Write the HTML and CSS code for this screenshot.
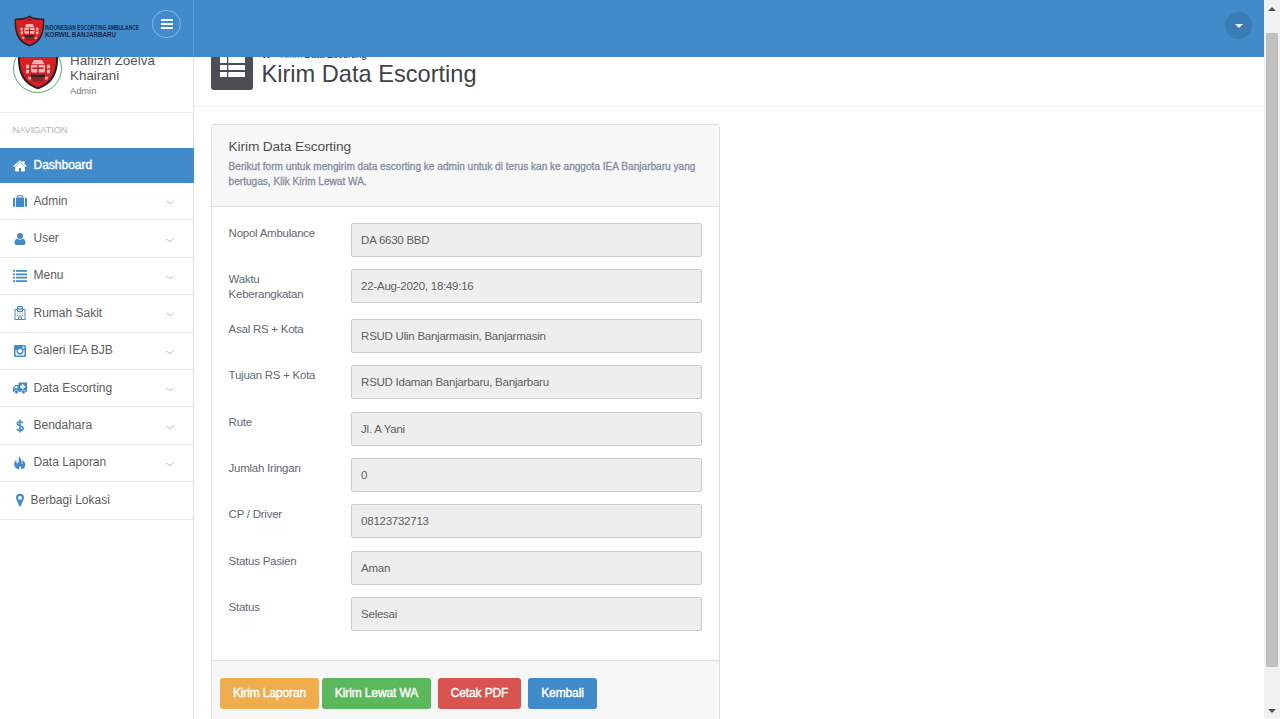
FILE: index.html
```html
<!DOCTYPE html>
<html lang="id">
<head>
<meta charset="utf-8">
<title>Kirim Data Escorting</title>
<link rel="stylesheet" href="styles.css">
</head>
<body>
<svg width="0" height="0" class="defs">
  <symbol id="shield" viewBox="0 0 30 30" preserveAspectRatio="none">
    <path d="M15 .5C11.500 3 6.500 3.300.7 3.200.2 15 2 25 15 29.500 28 25 29.800 15 29.300 3.200 23.500 3.300 18.500 3 15 .5z" fill="#252329"/>
    <path d="M15 2C11 4.200 7 4.700 2 4.600 1.800 15 4 24 15 28 26 24 28.200 15 28 4.600 23 4.700 19 4.200 15 2z" fill="#d81f26"/>
    <path d="M12 8.500h6l1.500 3h-9z" fill="#f3b5b0"/>
    <path d="M7.500 12v7M22.500 12v7" stroke="#f2c3bd" stroke-width="2.200" stroke-dasharray="2.500 1"/>
    <rect x="10" y="12" width="10" height="5.500" rx="1" fill="#efb4ad"/>
    <path d="M11 14.500h8M15 12v6" stroke="#b52026" stroke-width="1"/>
    <path d="M10 19h10v2H10z" fill="#33242a"/>
    <path d="M11 21h8v3h-8z" fill="#8f2228"/>
    <path d="M8 20.500h2v2H8zM20 20.500h2v2h-2z" fill="#edaaa4"/>
    <path d="M13 4.500h4" stroke="#551c21"/>
  </symbol>
</svg>

<div class="app">
  <header class="topbar">
    <div class="brand">
      <svg class="brand-shield"><use href="#shield"/></svg>
      <svg class="brand-name" viewBox="0 0 95 18">
        <text x="0" y="8" textLength="94" lengthAdjust="spacingAndGlyphs">INDONESIAN ESCORTING AMBULANCE</text>
        <text x="0" y="14.800" class="brand-sub" textLength="71" lengthAdjust="spacingAndGlyphs">KORWIL BANJARBARU</text>
      </svg>
      <button class="toggle"><span></span><span></span><span></span></button>
    </div>
    <button class="user-menu"><i></i></button>
  </header>

  <div class="body">
    <aside class="sidebar">
      <div class="profile">
        <div class="avatar"><svg><use href="#shield"/></svg></div>
        <div class="who"><div class="name">Hafiizh Zoelva<br>Khairani</div><div class="role">Admin</div></div>
      </div>
      <div class="nav-title">NAVIGATION</div>
      <nav>
        <a class="item active"><svg viewBox="0 0 14 14"><path d="M7 1.200L.3 7l.8.900L7 3l5.900 4.900.8-.9-2.200-1.900V2H9.700v1.500z"/><path d="M7 3.500L2.200 7.500v5h3.700V9h2.200v3.500h3.700v-5z"/></svg><span>Dashboard</span></a>
        <a class="item"><svg viewBox="0 0 14 14"><path d="M3 3.500h8V13H3zM0 5q0-1.500 1.500-1.500H2V13h-.5Q0 13 0 11.500zM12 3.500h.5Q14 3.500 14 5v6.500q0 1.500-1.500 1.500H12z"/><path d="M4.700 3.500V1.700h4.600v1.800" fill="none" stroke="currentColor" stroke-width="1.100"/></svg><span>Admin</span><b></b></a>
        <a class="item"><svg viewBox="0 0 14 14"><circle cx="7" cy="4" r="3"/><path d="M1.500 11c0-3 1.200-4.200 2.900-4.300 1.500 1.300 3.700 1.300 5.200 0 1.700.1 2.900 1.300 2.900 4.300 0 1.200-.8 2-2 2h-7c-1.200 0-2-.8-2-2z"/></svg><span>User</span><b></b></a>
        <a class="item"><svg viewBox="0 0 14 14"><path d="M0 1h2v1.800H0zM3 1h11v1.800H3zM0 4.400h2v1.800H0zM3 4.400h11v1.800H3zM0 7.800h2v1.800H0zM3 7.800h11v1.800H3zM0 11.200h2V13H0zM3 11.200h11V13H3z"/></svg><span>Menu</span><b></b></a>
        <a class="item"><svg viewBox="0 0 14 14"><path d="M4.500 3.500H2v10h10v-10H9.500M5.500 13.500V11h3v2.500" fill="none" stroke="currentColor"/><path d="M4.500.5h5v5h-5z" fill="none" stroke="currentColor"/><path d="M5.800 1.500v3M8.200 1.500v3M5.800 3h2.400M4 7.200h1.200M6.400 7.200h1.200M8.800 7.200H10M4 9.500h1.200M6.400 9.500h1.200M8.800 9.500H10" stroke="currentColor"/></svg><span>Rumah Sakit</span><b></b></a>
        <a class="item"><svg viewBox="0 0 14 14"><path fill-rule="evenodd" d="M2.500 1h9Q13 1 13 2.500v9q0 1.500-1.500 1.500h-9Q1 13 1 11.500v-9Q1 1 2.500 1zM2.500 6v4.800q0 .7.700.7h7.600q.7 0 .7-.7V6h-1.200a3.500 3.500 0 1 1-6.600 0zM9.500 2.500v2h2v-2z"/><circle cx="7" cy="7" r="2.100" fill="#fff"/></svg><span>Galeri IEA BJB</span><b></b></a>
        <a class="item"><svg viewBox="0 0 14 14"><path fill-rule="evenodd" d="M5.500 1.500H14v9.300H0V7l2.500-3h3zM3 5.300L1.300 7.300h3.200v-2zM8.800 3v1.800H7v1.600h1.800v1.800h1.600V6.400h1.800V4.800h-1.800V3z"/><circle cx="3.500" cy="11" r="1.900" stroke="#fff" stroke-width=".5"/><circle cx="10.500" cy="11" r="1.900" stroke="#fff" stroke-width=".5"/></svg><span>Data Escorting</span><b></b></a>
        <a class="item"><svg viewBox="0 0 14 14"><path d="M10 4C8.700 2.400 4.400 2 4.300 4.500c0 2.700 5.800 1.700 5.800 4.700 0 2.800-4.600 2.800-6.200.8M7 .5v13" fill="none" stroke="currentColor" stroke-width="1.600"/></svg><span>Bendahara</span><b></b></a>
        <a class="item"><svg viewBox="0 0 14 14"><path d="M6.500 0c.2 2.300 2.300 3.500 2.300 6 0 1-.4 1.900-.8 2.500C10 7.600 9.700 5.500 9.300 4c2 1.400 3.200 3.200 3 5.300-.2 2.300-2 3.900-4.100 4.500.7-1.600-.2-2.800-1.300-3.800-.1 1.500-1.300 2.200-.6 3.800C3.600 13 1.400 11.300 1.200 8.800 1 6.600 2 5.200 3.400 3.800 3.200 5.500 3.300 7 4.500 7.600 7 5.500 4.800 2.500 6.500 0z"/></svg><span>Data Laporan</span><b></b></a>
        <a class="item pin"><svg viewBox="0 0 14 14"><path fill-rule="evenodd" d="M7 .8a4 4 0 0 1 4 4c0 2.400-2.100 4.500-3 8q-1 1.400-2 0c-.9-3.500-3-5.600-3-8a4 4 0 0 1 4-4zm0 2.200a1.900 1.900 0 1 0 0 3.800A1.900 1.900 0 0 0 7 3z"/></svg><span>Berbagi Lokasi</span></a>
      </nav>
    </aside>

    <main>
      <div class="page-head">
        <div class="page-icon"><svg viewBox="0 0 25 21"><path d="M0 0h7v6H0zM8.300 0H25v6H8.300zM0 8h7v5H0zM8.300 8H25v5H8.300zM0 15h7v5H0zM8.300 15H25v5H8.300z" fill="#fff"/></svg></div>
        <div class="titles">
          <div class="crumbs"><svg viewBox="0 0 14 14"><path d="M7 1L0 7h2v6h3.500V9h3v4H12V7h2z"/></svg><span>Kirim</span><span class="current">Data Escorting</span></div>
          <h1>Kirim Data Escorting</h1>
        </div>
      </div>

      <section class="panel">
        <div class="panel-head">
          <h2>Kirim Data Escorting</h2>
          <p>Berikut form untuk mengirim data escorting ke admin untuk di terus kan ke anggota IEA Banjarbaru yang<br>bertugas, Klik Kirim Lewat WA.</p>
        </div>
        <div class="panel-body">
          <div class="row"><label>Nopol Ambulance</label><div class="field">DA 6630 BBD</div></div>
          <div class="row two"><label>Waktu<br>Keberangkatan</label><div class="field">22-Aug-2020, 18:49:16</div></div>
          <div class="row"><label>Asal RS + Kota</label><div class="field">RSUD Ulin Banjarmasin, Banjarmasin</div></div>
          <div class="row"><label>Tujuan RS + Kota</label><div class="field">RSUD Idaman Banjarbaru, Banjarbaru</div></div>
          <div class="row"><label>Rute</label><div class="field">Jl. A Yani</div></div>
          <div class="row"><label>Jumlah Iringan</label><div class="field">0</div></div>
          <div class="row"><label>CP / Driver</label><div class="field">08123732713</div></div>
          <div class="row"><label>Status Pasien</label><div class="field">Aman</div></div>
          <div class="row"><label>Status</label><div class="field">Selesai</div></div>
        </div>
        <div class="panel-foot">
          <button class="btn warn">Kirim Laporan</button>
          <button class="btn ok">Kirim Lewat WA</button>
          <button class="btn danger">Cetak PDF</button>
          <button class="btn primary">Kembali</button>
        </div>
      </section>
    </main>
  </div>
</div>
<div class="scroll"><i class="up"></i><div class="thumb"></div><i class="down"></i></div>
</body>
</html>
```

FILE: styles.css
```css
* { box-sizing: border-box; }
body {
  margin: 0; width: 1280px; height: 719px; overflow: hidden; display: flex;
  font: 11.500px/15px "Liberation Sans", Arial, sans-serif; color: #5f6874; background: #fff;
}
button { font-family: inherit; border: 0; padding: 0; }
.defs { position: absolute; }
.app { width: 1264px; height: 719px; display: flex; flex-direction: column; }
.topbar { height: 57px; flex: none; background: #428bca; display: flex; justify-content: space-between; }
.brand { width: 194px; border-right: 1px solid #5c9bd1; display: flex; padding-left: 14px; }
.brand-shield { width: 31px; height: 32px; margin-top: 15px; flex: none; }
.brand-name { width: 95px; height: 18px; margin: 22px 0 0; flex: none; overflow: visible; font: bold 8px "Liberation Sans", sans-serif; fill: #15294a; }
.brand-sub { font-size: 7px; }
.toggle {
  width: 29px; height: 28px; margin: 10px 0 0 12px; border: 1px solid #83b3dd; border-radius: 50%;
  background: none; display: flex; flex-direction: column; align-items: center; justify-content: center; gap: 2px;
}
.toggle span { width: 12px; height: 2px; background: #fff; }
.user-menu { width: 27px; height: 27px; border-radius: 50%; background: #3b7cb5; margin: 12px 12px 0 0; display: flex; align-items: center; justify-content: center; }
.user-menu i { border: 4px solid transparent; border-top-color: #e4f3ff; border-bottom: 0; }

.body { flex: 1; min-height: 0; display: flex; }
.sidebar { width: 194px; border-right: 1px solid #e2e2e2; }
.profile { height: 56px; display: flex; overflow: hidden; border-bottom: 1px solid #eee; padding-left: 13px; }
.avatar { width: 49px; height: 49px; margin-top: -13px; border: 1px solid #55a860; border-radius: 50%; flex: none; display: flex; justify-content: center; overflow: hidden; }
.avatar svg { width: 42px; height: 42px; margin-top: 3px; flex: none; }
.who { margin: -4px 0 0 8px; }
.name { font-size: 13.400px; line-height: 15px; color: #555; white-space: nowrap; }
.role { font-size: 9.300px; line-height: 16px; color: #777; }
.nav-title { height: 35px; padding: 10px 0 0 12.500px; font-size: 9.300px; line-height: 14px; letter-spacing: -.1px; color: #b5b5b5; }
.item { height: 37.400px; border-bottom: 1px solid #e7e7e7; display: flex; align-items: center; padding: 1px 18px 1px 12.500px; font-size: 12px; color: #5d5d5d; }
.item svg { width: 14px; height: 14px; fill: currentColor; color: #428bca; margin-right: 7px; }
.item span { flex: 1; }
.item b { width: 6px; height: 6px; margin-right: 2px; border: solid #c2c2c2; border-width: 0 1px 1px 0; transform: scaleY(.75) rotate(45deg); }
.item.active { height: 35px; background: #428bca; border: 0; width: 194px; color: #fff; -webkit-text-stroke: .4px; }
.item.active svg { color: #fff; }
.item.pin svg { margin-right: 4px; }

main { flex: 1; }
.page-head { height: 50px; border-bottom: 1px solid #eee; padding-left: 17px; display: flex; }
.page-icon { width: 42px; height: 33px; background: #4b4f53; border-radius: 0 0 3px 3px; flex: none; display: flex; justify-content: center; overflow: hidden; }
.page-icon svg { width: 25px; height: 21px; }
.titles { margin-left: 8.500px; height: 48px; overflow: hidden; }
.crumbs { margin-top: -8px; height: 11px; display: flex; gap: 10px; font-size: 9.500px; line-height: 11px; color: #666; }
.crumbs svg { width: 9px; height: 10px; }
.crumbs .current { color: #222; margin-left: -8px; }
h1 { margin: -1px 0 0; font-size: 23.600px; line-height: 30px; font-weight: 400; color: #404349; white-space: nowrap; }
.panel { width: 509.500px; height: 620px; margin: 17px 0 0 16.600px; border: 1px solid #dedede; border-radius: 3px 3px 0 0; }
.panel-head { height: 82px; background: #f7f7f7; border-bottom: 1px solid #ddd; padding: 13px 17px 0; }
h2 { margin: 0; font-size: 13.700px; line-height: 18px; letter-spacing: -.12px; font-weight: 400; color: #4e4e4e; }
.panel-head p { margin: 3px 0 0; font-size: 10.100px; line-height: 15px; color: #858d9b; white-space: nowrap; -webkit-text-stroke: .3px; }
.panel-body { height: 453px; padding: 16px 17px 0; display: flex; flex-direction: column; gap: 12.420px; }
.row { display: grid; grid-template-columns: 122.500px 1fr; height: 34px; flex: none; letter-spacing: -.25px; }
.row.two { height: 37px; }
.row label { padding-top: 3px; }
.field { height: 34px; border: 1px solid #ccc; border-radius: 2px; background: #eee; padding-left: 9px; line-height: 32px; color: #606060; }
.panel-foot { height: 84px; background: #f7f7f7; border-top: 1px solid #ddd; display: flex; padding: 17px 8.400px; }
.btn { height: 31px; padding-bottom: 1px; border-radius: 3px; color: #fff; font-size: 12px; letter-spacing: -.12px; -webkit-text-stroke: .4px; white-space: nowrap; }
.warn { width: 99px; background: #f0ad4e; margin-right: 3px; }
.ok { width: 109px; background: #5cb85c; margin-right: 7px; }
.danger { width: 83px; background: #d9534f; margin-right: 7px; }
.primary { width: 69px; background: #428bca; }

.scroll { width: 16px; height: 719px; background: #f1f1f1; display: flex; flex-direction: column; align-items: center; padding: 7px 0 6px; }
.scroll i { border: 4px solid transparent; }
.up { border-top: 0 !important; border-bottom-color: #505050 !important; }
.down { border-bottom: 0 !important; border-top-color: #505050 !important; margin-top: auto; }
.thumb { width: 12px; height: 634px; background: #c1c1c1; margin-top: 22px; }
```
